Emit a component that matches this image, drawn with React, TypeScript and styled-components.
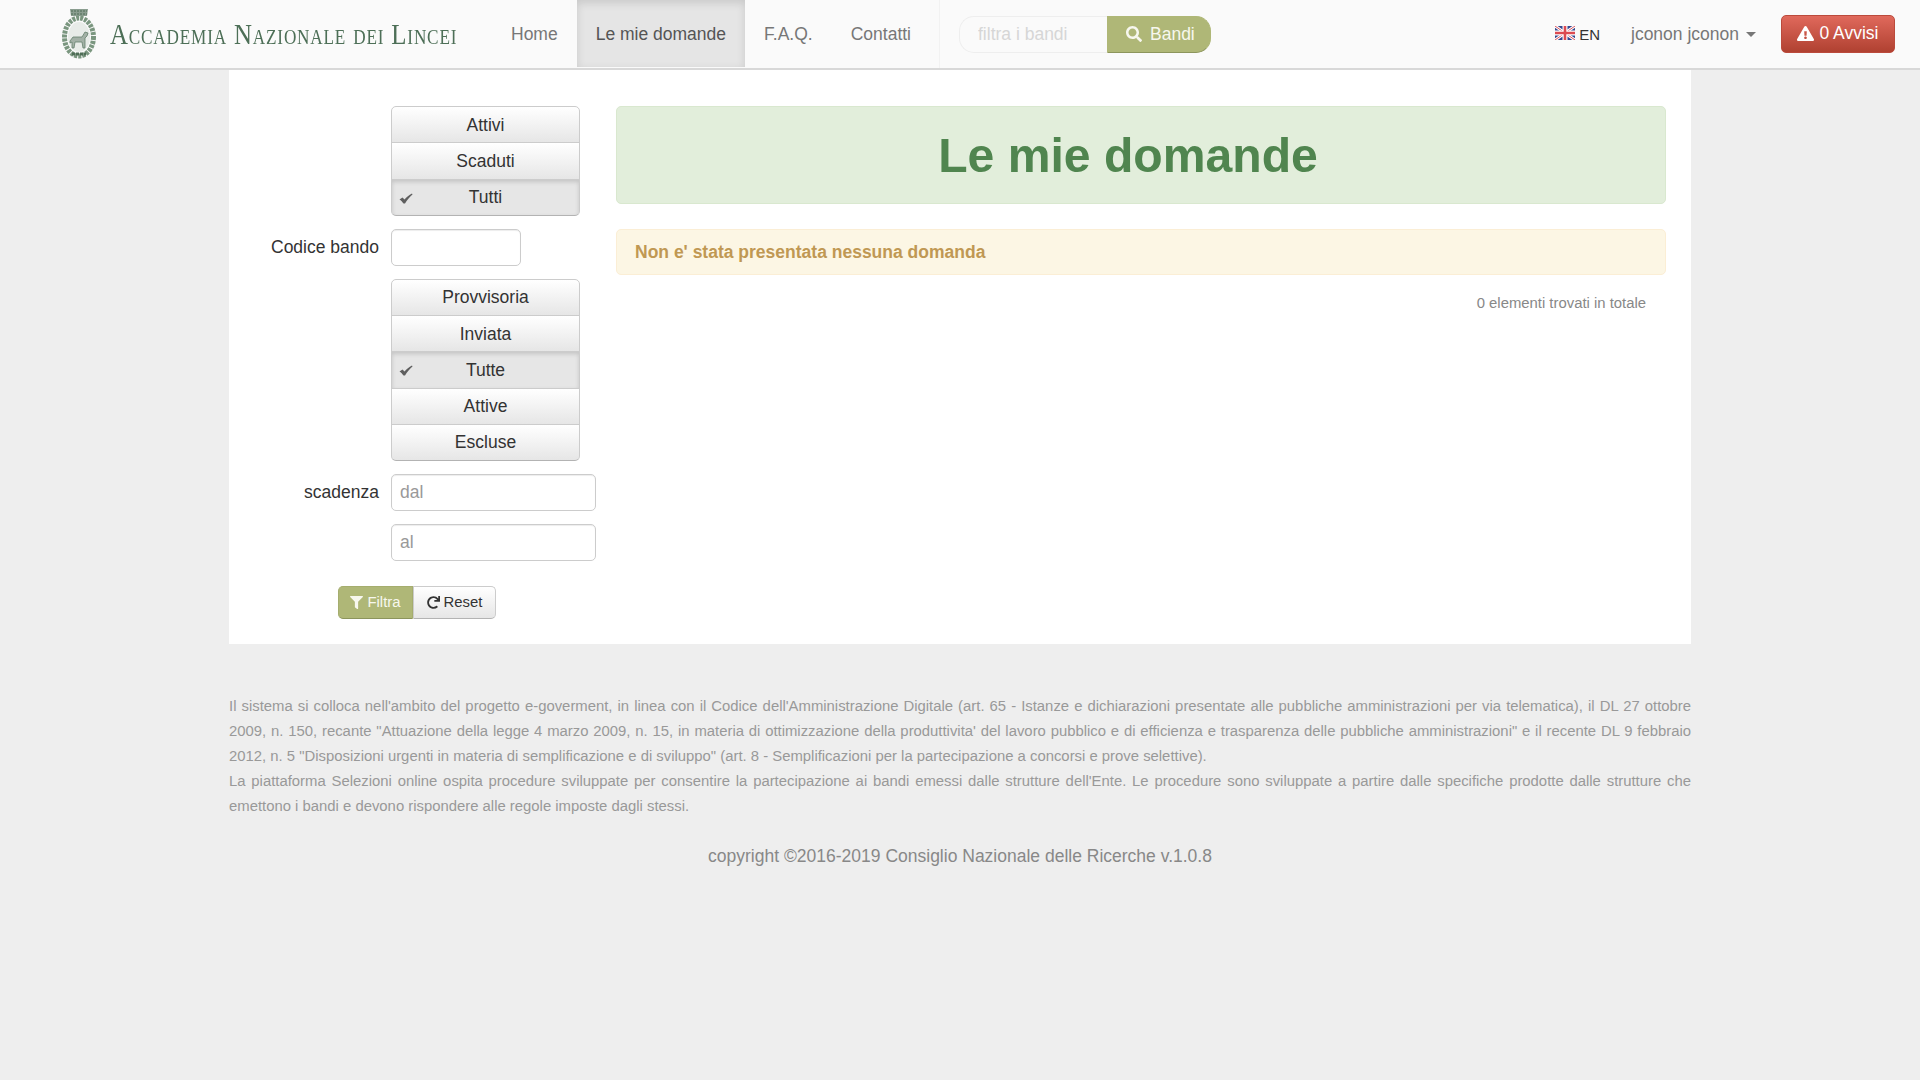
import React from 'react'
import styled, { createGlobalStyle } from 'styled-components'
import { FaExclamationTriangle, FaFilter, FaRedo, FaSearch } from 'react-icons/fa'

const GlobalStyle = createGlobalStyle`
  html, body { margin: 0; padding: 0; }
  body {
    background: #eeeeee;
    color: #333333;
    font-family: "Liberation Sans", Arial, sans-serif;
    font-size: 17.5px;
    line-height: 25px;
  }
  * { box-sizing: border-box; }
`

const Page = styled.div`
  min-height: 1080px;
`

const Navbar = styled.header`
  display: flex;
  height: 70px;
  background: #fafafa;
  border-bottom: 2px solid #d8d8d8;
  padding-right: 25px;
`

const Brand = styled.a`
  display: flex;
  align-items: center;
  width: 492px;
  padding-left: 61px;
  gap: 13px;
  height: 68px;
`

const BrandName = styled.span`
  font-family: "Liberation Serif", "Times New Roman", serif;
  font-variant: small-caps;
  font-size: 29px;
  letter-spacing: 0.95px;
  color: #4d6f57;
  white-space: nowrap;
  line-height: 30px;
  transform: scaleX(0.859);
  transform-origin: left center;
`

const NavList = styled.nav`
  display: flex;
  height: 67px;
`

const NavItem = styled.a<{ $active?: boolean }>`
  display: flex;
  align-items: center;
  padding: 2px 19px 0;
  color: ${p => (p.$active ? '#555555' : '#777777')};
  background: ${p => (p.$active ? '#e5e5e5' : 'transparent')};
  box-shadow: ${p => (p.$active ? 'inset 0 3px 8px rgba(0, 0, 0, 0.125)' : 'none')};
`

const SearchForm = styled.form`
  display: flex;
  align-items: center;
  height: 68px;
  margin-left: 9px;
  padding-left: 19px;
  border-left: 1px solid #f2f2f2;
`

const SearchInput = styled.input`
  width: 148px;
  height: 37px;
  padding: 0 18px;
  border: 1px solid #eeeeee;
  border-right: 0;
  border-radius: 15px 0 0 15px;
  background: #fafafa;
  font: inherit;
  outline: none;
  &::placeholder { color: #d6d6d6; opacity: 1; }
`

const SearchButton = styled.button`
  display: flex;
  align-items: center;
  gap: 8px;
  width: 104px;
  height: 37px;
  padding: 0 0 0 18px;
  border: 1px solid #afb777;
  border-bottom-color: #8c955c;
  border-radius: 0 15px 15px 0;
  background: #afb777;
  color: #f7f7ee;
  font: inherit;
`

const NavRight = styled.div`
  display: flex;
  align-items: center;
  margin-left: auto;
  height: 68px;
`

const LangLink = styled.a`
  display: flex;
  align-items: center;
  gap: 4px;
  font-size: 15px;
  color: #333333;
  margin-right: 31px;
  padding-top: 1px;
`

const FlagIcon = styled.svg`
  margin-bottom: 3px;
`

const UserMenu = styled.a`
  display: flex;
  align-items: center;
  color: #777777;
  margin-right: 25px;
`

const Caret = styled.span`
  width: 0;
  height: 0;
  margin-left: 7px;
  border-left: 5px solid transparent;
  border-right: 5px solid transparent;
  border-top: 5px solid #777777;
`

const AlertsButton = styled.button`
  display: flex;
  align-items: center;
  justify-content: center;
  gap: 5px;
  width: 114px;
  height: 38px;
  border: 1px solid #bb4a3c;
  border-radius: 5px;
  background: linear-gradient(to bottom, #e0695c, #b04131);
  color: #ffffff;
  font: inherit;
  padding: 0 0 2px;
`

const Container = styled.main`
  width: 1462px;
  margin: 0 auto;
`

const Content = styled.section`
  display: flex;
  background: #ffffff;
  padding: 36px 25px 25px 0;
`

const Sidebar = styled.form`
  display: flex;
  flex-direction: column;
  gap: 13px;
  width: 387px;
`

const FormRow = styled.div`
  display: grid;
  grid-template-columns: 150px auto;
  column-gap: 12px;
  justify-content: start;
  align-items: center;
`

const FormLabel = styled.label`
  text-align: right;
`

const ButtonStack = styled.div`
  display: flex;
  flex-direction: column;
  width: 189px;
  grid-column: 2;
  border-radius: 5px;
`

const StackButton = styled.button<{ $active?: boolean }>`
  position: relative;
  height: 37.25px;
  margin-top: -1px;
  padding: 1px 0 0;
  border: 1px solid #cccccc;
  border-bottom-color: ${p => (p.$active ? '#b3b3b3' : '#cccccc')};
  background: ${p => (p.$active ? '#e6e6e6' : 'linear-gradient(to bottom, #ffffff, #e6e6e6)')};
  box-shadow: ${p => (p.$active ? 'inset 0 2px 4px rgba(0, 0, 0, 0.15)' : 'none')};
  color: #333333;
  font: inherit;
  &:first-child { margin-top: 0; border-radius: 5px 5px 0 0; }
  &:last-child { border-radius: 0 0 5px 5px; border-bottom-color: #b3b3b3; }
`

const CheckMark = styled.svg`
  position: absolute;
  left: 7px;
  top: 13px;
`

const TextInput = styled.input<{ $width: number }>`
  display: block;
  width: ${p => p.$width}px;
  height: 37px;
  padding: 0 8px;
  border: 1px solid #cccccc;
  border-radius: 5px;
  background: #ffffff;
  box-shadow: inset 0 1px 1px rgba(0, 0, 0, 0.075);
  font: inherit;
  color: #555555;
  grid-column: 2;
  &::placeholder { color: #999999; opacity: 1; }
`

const Actions = styled.div`
  display: flex;
  margin-top: 12px;
  padding-left: 109px;
`

const SmallButton = styled.button<{ $primary?: boolean }>`
  display: flex;
  align-items: center;
  justify-content: center;
  gap: 4px;
  height: 33px;
  padding: 0;
  font: inherit;
  font-size: 14.875px;
  border: 1px solid ${p => (p.$primary ? '#a5ad6e' : '#cccccc')};
  border-bottom-color: ${p => (p.$primary ? '#8c955c' : '#b3b3b3')};
  border-radius: ${p => (p.$primary ? '5px 0 0 5px' : '0 5px 5px 0')};
  width: ${p => (p.$primary ? '75px' : '83px')};
  background: ${p => (p.$primary ? '#afb777' : 'linear-gradient(to bottom, #ffffff, #e6e6e6)')};
  color: ${p => (p.$primary ? '#f7f7ee' : '#333333')};
`

const Results = styled.div`
  flex: 1;
  display: flex;
  flex-direction: column;
`

const TitleBox = styled.div`
  height: 98px;
  padding: 0 35px 0 9px;
  background: #e2eedb;
  border: 1px solid #d9e8cf;
  border-radius: 5px;
`

const Title = styled.h1`
  margin: 0;
  text-align: center;
  font-size: 48.125px;
  line-height: 96px;
  font-weight: bold;
  color: #50854f;
`

const WarningBox = styled.div`
  height: 46px;
  margin-top: 25px;
  padding: 10px 35px 10px 18px;
  background: #fcf6e4;
  border: 1px solid #fbeed5;
  border-radius: 5px;
  color: #c09853;
  font-weight: bold;
`

const TotalCount = styled.div`
  margin-top: 16px;
  padding-right: 20px;
  text-align: right;
  font-size: 14.875px;
  color: #888888;
`

const Footer = styled.footer`
  padding-top: 50px;
  color: #999999;
`

const FooterText = styled.p`
  margin: 0;
  font-size: 14.875px;
  text-align: justify;
`

const Copyright = styled.p`
  margin: 25px 0 0;
  text-align: center;
  color: #888888;
`

const Emblem = () => (
  <svg width="36" height="50" viewBox="0 0 36 50" style={{ filter: 'blur(0.5px)', flex: 'none' }}>
    <path d="M9 0h18l-1 7H10z" fill="#8a9d8f" />
    <path d="M10 2h16M10 5h16" stroke="#4f6d57" strokeWidth="1" strokeDasharray="2 1" />
    <ellipse cx="18" cy="28" rx="14.5" ry="19" fill="none" stroke="#7a967f" strokeWidth="5" strokeDasharray="3 1" />
    <ellipse cx="18" cy="28" rx="11" ry="15" fill="#e8ece8" />
    <path d="M9 32l3-4h9l3-5 3 1-1 3-2 2v10h-2l-1-6h-7l-1 6H11v-6l-2 1z" fill="#a3b1a6" stroke="#65806c" strokeWidth="0.8" />
    <path d="M11 45h14" stroke="#4f6d57" strokeWidth="3" strokeDasharray="3 1" />
  </svg>
)

const UkFlag = () => (
  <FlagIcon width="20" height="14" viewBox="0 0 20 14">
    <rect width="20" height="14" fill="#33478f" />
    <path d="M0 0l20 14M20 0L0 14" stroke="#ffffff" strokeWidth="3" />
    <path d="M0 0l20 14M20 0L0 14" stroke="#d9545e" strokeWidth="1" />
    <path d="M10 0v14M0 7h20" stroke="#ffffff" strokeWidth="5" />
    <path d="M10 0v14M0 7h20" stroke="#dc4a50" strokeWidth="2.6" />
  </FlagIcon>
)

const Check = () => (
  <CheckMark width="14" height="11" viewBox="0 0 14 11">
    <path d="M0.5 6.5L3.5 4.5L5.5 6.5C7.5 4 10 2 13 0.5L13.5 1.5C10.5 4 8 7 6 10.5H4.5C3.5 9 2 7.5 0.5 6.5Z" fill="#5f5f5f" />
  </CheckMark>
)

export default function App() {
  return (
    <Page>
      <GlobalStyle />
      <Navbar>
        <Brand>
          <Emblem />
          <BrandName>Accademia Nazionale dei Lincei</BrandName>
        </Brand>
        <NavList>
          <NavItem>Home</NavItem>
          <NavItem $active>Le mie domande</NavItem>
          <NavItem>F.A.Q.</NavItem>
          <NavItem>Contatti</NavItem>
        </NavList>
        <SearchForm>
          <SearchInput placeholder="filtra i bandi" />
          <SearchButton type="button"><FaSearch size={16} /> Bandi</SearchButton>
        </SearchForm>
        <NavRight>
          <LangLink><UkFlag /> EN</LangLink>
          <UserMenu>jconon jconon <Caret /></UserMenu>
          <AlertsButton type="button"><FaExclamationTriangle size={17} /> 0 Avvisi</AlertsButton>
        </NavRight>
      </Navbar>
      <Container>
        <Content>
          <Sidebar>
            <FormRow>
              <ButtonStack>
                <StackButton type="button">Attivi</StackButton>
                <StackButton type="button">Scaduti</StackButton>
                <StackButton type="button" $active><Check />Tutti</StackButton>
              </ButtonStack>
            </FormRow>
            <FormRow>
              <FormLabel>Codice bando</FormLabel>
              <TextInput $width={130} />
            </FormRow>
            <FormRow>
              <ButtonStack>
                <StackButton type="button">Provvisoria</StackButton>
                <StackButton type="button">Inviata</StackButton>
                <StackButton type="button" $active><Check />Tutte</StackButton>
                <StackButton type="button">Attive</StackButton>
                <StackButton type="button">Escluse</StackButton>
              </ButtonStack>
            </FormRow>
            <FormRow>
              <FormLabel>scadenza</FormLabel>
              <TextInput $width={205} placeholder="dal" />
            </FormRow>
            <FormRow>
              <TextInput $width={205} placeholder="al" />
            </FormRow>
            <Actions>
              <SmallButton type="button" $primary><FaFilter size={13} /> Filtra</SmallButton>
              <SmallButton type="button"><FaRedo size={13} /> Reset</SmallButton>
            </Actions>
          </Sidebar>
          <Results>
            <TitleBox><Title>Le mie domande</Title></TitleBox>
            <WarningBox>Non e' stata presentata nessuna domanda</WarningBox>
            <TotalCount>0 elementi trovati in totale</TotalCount>
          </Results>
        </Content>
        <Footer>
          <FooterText>
            Il sistema si colloca nell'ambito del progetto e-goverment, in linea con il Codice dell'Amministrazione Digitale (art. 65 - Istanze e dichiarazioni presentate alle pubbliche amministrazioni per via telematica), il DL 27 ottobre 2009, n. 150, recante "Attuazione della legge 4 marzo 2009, n. 15, in materia di ottimizzazione della produttivita' del lavoro pubblico e di efficienza e trasparenza delle pubbliche amministrazioni" e il recente DL 9 febbraio 2012, n. 5 "Disposizioni urgenti in materia di semplificazione e di sviluppo" (art. 8 - Semplificazioni per la partecipazione a concorsi e prove selettive).
          </FooterText>
          <FooterText>
            La piattaforma Selezioni online ospita procedure sviluppate per consentire la partecipazione ai bandi emessi dalle strutture dell'Ente. Le procedure sono sviluppate a partire dalle specifiche prodotte dalle strutture che emettono i bandi e devono rispondere alle regole imposte dagli stessi.
          </FooterText>
          <Copyright>copyright ©2016-2019 Consiglio Nazionale delle Ricerche v.1.0.8</Copyright>
        </Footer>
      </Container>
    </Page>
  )
}
